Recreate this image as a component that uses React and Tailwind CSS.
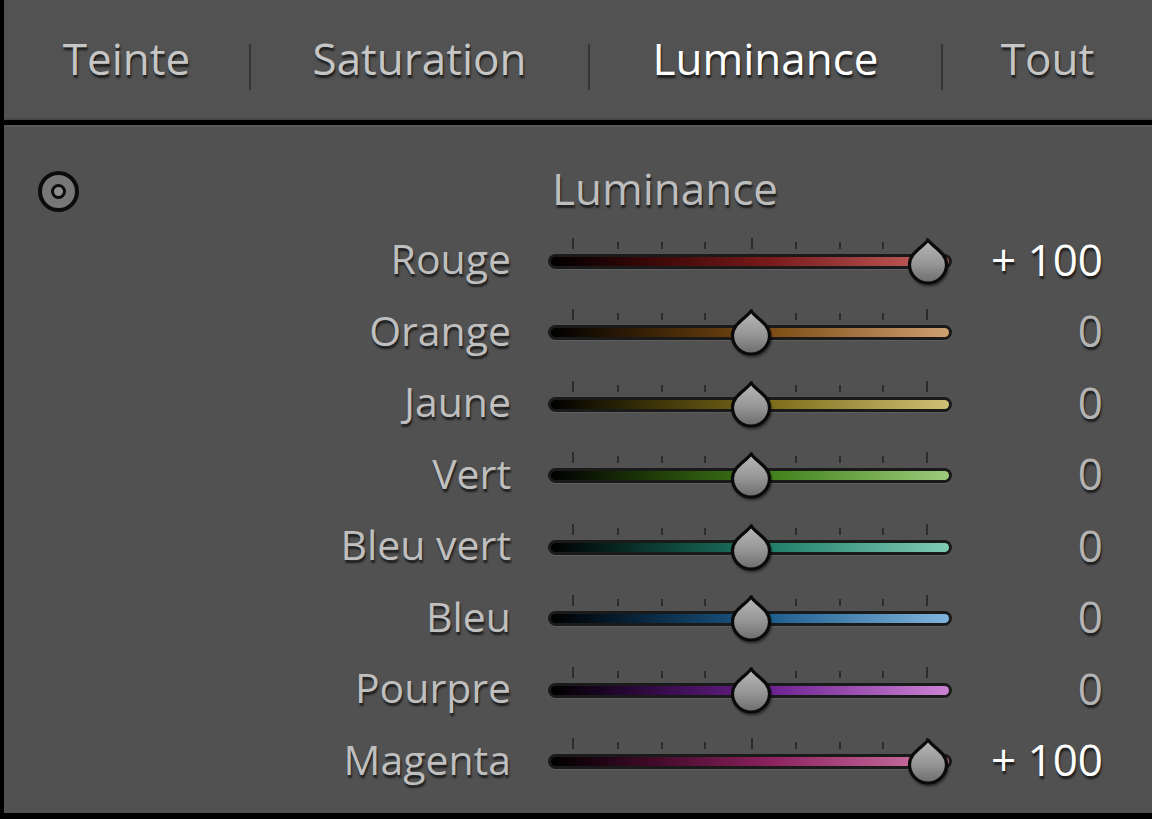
import React from 'react';

const font = { fontFamily: '"Open Sans", "Noto Sans", sans-serif' };

const tabs = [
  { label: 'Teinte', w: 'w-[245px]' },
  { label: 'Saturation', w: 'w-[337px]' },
  { label: 'Luminance', w: 'w-[351px]', active: true },
  { label: 'Tout', w: 'flex-1' },
];

const rows = [
  { label: 'Rouge', value: 100, track: 'bg-[linear-gradient(to_right,#000_0%,#3a0808_25%,#7a1a1a_55%,#c86464_100%)]' },
  { label: 'Orange', value: 0, track: 'bg-[linear-gradient(to_right,#000_0%,#3a2206_25%,#7c4c14_55%,#cfa070_100%)]' },
  { label: 'Jaune', value: 0, track: 'bg-[linear-gradient(to_right,#000_0%,#3a3208_25%,#7c6c1a_55%,#cfc074_100%)]' },
  { label: 'Vert', value: 0, track: 'bg-[linear-gradient(to_right,#000_0%,#1e3a08_25%,#40801a_55%,#9ccc7a_100%)]' },
  { label: 'Bleu vert', value: 0, track: 'bg-[linear-gradient(to_right,#000_0%,#0a3a30_25%,#1f7e6a_55%,#80ccb4_100%)]' },
  { label: 'Bleu', value: 0, track: 'bg-[linear-gradient(to_right,#000_0%,#0a2a44_25%,#1f5e8e_55%,#80b4dc_100%)]' },
  { label: 'Pourpre', value: 0, track: 'bg-[linear-gradient(to_right,#000_0%,#320a44_25%,#6c2290_55%,#cc84d4_100%)]' },
  { label: 'Magenta', value: 100, track: 'bg-[linear-gradient(to_right,#000_0%,#400a28_25%,#8c225e_55%,#d27aaa_100%)]' },
];

const ticks = [25, 70, 114, 157, 204, 248, 292, 335, 379];

const shadow = '[text-shadow:1px_3px_2px_rgba(0,0,0,0.65)]';

function Thumb({ x }) {
  return (
    <svg
      width="46"
      height="48"
      viewBox="0 0 46 48"
      className="absolute top-[-2px] drop-shadow-[1px_2px_1px_rgba(0,0,0,0.45)]"
      style={{ left: x - 23 }}
    >
      <defs>
        <linearGradient id="thumbFill" x1="0" y1="0" x2="0" y2="1">
          <stop offset="0%" stopColor="#b8b8b8" />
          <stop offset="55%" stopColor="#969696" />
          <stop offset="100%" stopColor="#6c6c6c" />
        </linearGradient>
      </defs>
      <path
        d="M23 3 C27 9.5 41.5 15.5 41.5 27.5 A18.5 18.5 0 0 1 4.5 27.5 C4.5 15.5 19 9.5 23 3 Z"
        fill="url(#thumbFill)"
        stroke="#0a0a0a"
        strokeWidth="3.2"
        strokeLinejoin="round"
      />
    </svg>
  );
}

function Slider({ value, track }) {
  const x = 26 + ((value + 100) / 200) * 354;
  return (
    <div className="relative w-[404px] h-[44px]">
      {ticks.map((t, i) => (
        <div
          key={t}
          className={`absolute w-[2px] bg-[#2c2c2c] ${i === 0 || i === 4 || i === 8 ? 'top-[-1px] h-[11px]' : 'top-[3px] h-[7px]'}`}
          style={{ left: t - 1 }}
        />
      ))}
      <div className="absolute left-0 right-0 top-[15px] h-[15px] rounded-full bg-[#1a1a1a] p-[3px] shadow-[0_1px_0_rgba(255,255,255,0.08)]">
        <div className={`h-full rounded-full ${track}`} />
      </div>
      <Thumb x={x} />
    </div>
  );
}

export default function App() {
  return (
    <div
      className="w-[1152px] h-[819px] bg-[#515151] border-l-4 border-black flex flex-col overflow-hidden"
      style={font}
    >
      {/* onglets */}
      <div className="h-[120px] flex items-center bg-[#525252] shadow-[inset_0_-2px_0_#474747]">
        {tabs.map((t, i) => (
          <React.Fragment key={t.label}>
            {i > 0 && <div className="w-[2px] h-[46px] mt-[14px] bg-[#353535]" />}
            <div className={`${t.w} flex justify-center`}>
              <span
                className={`text-[44px] leading-none pb-[4px] ${shadow} ${t.active ? 'text-white' : 'text-[#c6c6c6]'}`}
              >
                {t.label}
              </span>
            </div>
          </React.Fragment>
        ))}
      </div>
      <div className="h-[5px] bg-black" />
      <div className="h-[2px] bg-[#5a5a5a]" />

      {/* panneau */}
      <div className="flex-1 flex flex-col pt-[39px]">
        <div className="relative h-[44px] flex items-center">
          <div className="absolute left-[34px] top-[5px] w-[41px] h-[41px] rounded-full border-[4px] border-[#0c0c0c] bg-[#777777] flex items-center justify-center">
            <div className="w-[15px] h-[15px] rounded-full border-[3px] border-[#0c0c0c] bg-[#8e8e8e]" />
          </div>
          <span className={`ml-[548px] text-[44px] leading-none text-[#bdbdbd] ${shadow}`}>
            Luminance
          </span>
        </div>
        <div className="flex flex-col mt-[15px]">
          {rows.map((r) => (
            <div key={r.label} className="h-[71.5px] flex items-center">
              <div className={`w-[507px] text-right text-[41px] leading-none text-[#bfbfbf] pb-[4px] ${shadow}`}>
                {r.label}
              </div>
              <div className="ml-[37px]">
                <Slider value={r.value} track={r.track} />
              </div>
              <div
                className={`w-[151px] text-right text-[44px] leading-none pb-[4px] ${shadow} ${r.value !== 0 ? 'text-white' : 'text-[#b4b4b4]'}`}
              >
                {r.value > 0 ? `+ ${r.value}` : r.value}
              </div>
            </div>
          ))}
        </div>
      </div>
      <div className="h-[6px] bg-black" />
    </div>
  );
}
